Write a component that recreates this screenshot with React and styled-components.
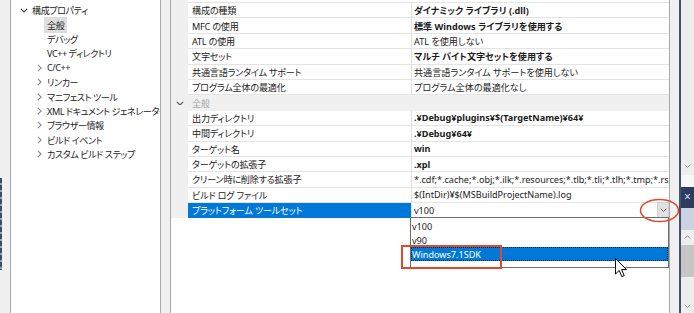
import React from 'react';
import styled, { createGlobalStyle } from 'styled-components';

const Global = createGlobalStyle`
  body {
    margin: 0;
    background: #f0f0f0;
    font-family: "Noto Sans", "Noto Sans CJK JP", sans-serif;
    font-feature-settings: "palt";
    font-size: 9.1px;
    color: #1b1b1b;
  }
`;

const Screen = styled.div`
  position: relative;
  width: 694px;
  height: 313px;
  overflow: hidden;
  display: flex;
  background: #f0f0f0;
`;

const LeftEdge = styled.div`
  width: 10px;
  flex: none;
  display: flex;
  flex-direction: column;
  padding-top: 178px;
  box-sizing: border-box;
`;

const EdgeBits = styled.div`
  width: 2px;
  height: 92px;
  background: repeating-linear-gradient(#3f4d66 0 5px, #9aa4b4 5px 7px);
`;

const TreePanel = styled.div`
  width: 151px;
  flex: none;
  box-sizing: border-box;
  border-left: 1px solid #a9a9a9;
  border-right: 1px solid #a9a9a9;
  background: #fff;
  padding-top: 3px;
  overflow: hidden;
  letter-spacing: -0.45px;
`;

const TreeItem = styled.div`
  height: 14.4px;
  display: flex;
  align-items: center;
  padding-left: ${(p) => p.indent}px;
  white-space: nowrap;
`;

const Chevron = styled.span`
  width: ${(p) => p.w || 12}px;
  flex: none;
  display: flex;
  align-items: center;
  justify-content: center;
`;

const TreeLabel = styled.span`
  padding: 1px 3px;
  margin-left: -3px;
  background: ${(p) => (p.selected ? '#dedede' : 'transparent')};
`;

const Splitter = styled.div`
  width: 9px;
  flex: none;
`;

const Grid = styled.div`
  width: 500px;
  flex: none;
  box-sizing: border-box;
  border-left: 1px solid #a9a9a9;
  border-right: 1px solid #a9a9a9;
  background: #fff;
  display: flex;
  flex-direction: column;
`;

const TopStub = styled.div`
  height: 3px;
  box-sizing: border-box;
  display: flex;
  &::before {
    content: '';
    width: 17px;
    background: #f0f0f0;
  }
  &::after {
    content: '';
    flex: 1;
    border-bottom: 1px solid #e4e4e4;
  }
`;

const Row = styled.div`
  position: relative;
  height: 15.4px;
  display: flex;
  flex: none;
`;

const Gutter = styled.div`
  width: 17px;
  flex: none;
  background: #f0f0f0;
  display: flex;
  align-items: center;
  justify-content: center;
`;

const NameCell = styled.div`
  width: 224px;
  flex: none;
  box-sizing: border-box;
  padding-left: 4px;
  display: flex;
  align-items: center;
  white-space: nowrap;
  overflow: hidden;
  letter-spacing: -0.2px;
  border-right: 1px solid #e0e0e0;
  border-bottom: 1px solid ${(p) => (p.selected ? '#0078d7' : '#e4e4e4')};
  background: ${(p) => (p.selected ? '#0078d7' : '#fff')};
  color: ${(p) => (p.selected ? '#fff' : '#1b1b1b')};
`;

const ValueCell = styled.div`
  position: relative;
  flex: 1;
  min-width: 0;
  box-sizing: border-box;
  padding-left: 2px;
  display: flex;
  align-items: center;
  white-space: nowrap;
  border-bottom: 1px solid #e4e4e4;
  font-weight: ${(p) => (p.bold ? 700 : 400)};
`;

const ValueText = styled.span`
  flex: 1;
  overflow: hidden;
`;

const HeaderRow = styled.div`
  height: 15.4px;
  display: flex;
  flex: none;
  background: #f0f0f0;
  color: #a6a6a6;
  align-items: center;
`;

const HeaderLabel = styled.span`
  padding-left: 4px;
`;

const DropButton = styled.div`
  width: 12px;
  height: 16px;
  flex: none;
  align-self: center;
  box-sizing: border-box;
  background: #e1e1e1;
  border: 1px solid #d0d0d0;
  display: flex;
  align-items: center;
  justify-content: center;
`;

const ListBox = styled.div`
  position: absolute;
  top: 100%;
  left: -2px;
  right: 0;
  height: 51px;
  box-sizing: border-box;
  border: 1px solid #6d6d6d;
  background: #fff;
  z-index: 2;
  font-weight: 400;
  padding-top: 1px;
`;

const ListItem = styled.div`
  height: 14px;
  display: flex;
  align-items: center;
  padding-left: 1px;
  box-sizing: border-box;
  background: ${(p) => (p.selected ? '#0078d7' : 'transparent')};
  color: ${(p) => (p.selected ? '#fff' : '#1b1b1b')};
  outline: ${(p) => (p.selected ? '1px dotted #0c2a55' : 'none')};
  outline-offset: -1px;
`;

const RightGap = styled.div`
  width: 9px;
  flex: none;
`;

const RightStrip = styled.div`
  width: 15px;
  flex: none;
  box-sizing: border-box;
  border-left: 2px solid #46526b;
  display: flex;
  flex-direction: column;
`;

const StripBlock = styled.div`
  height: ${(p) => p.h}px;
  flex: ${(p) => (p.h ? 'none' : 1)};
  background: ${(p) => p.bg};
  display: flex;
  flex-direction: column;
  align-items: center;
  justify-content: ${(p) => p.justify || 'center'};
  padding: ${(p) => p.pad || '0'};
  box-sizing: border-box;
`;

const CloseGlyph = styled.span`
  color: #d8dce6;
  font-size: 12px;
  line-height: 1;
  margin-top: 4px;
`;

const Ellipse = styled.svg`
  position: absolute;
  left: 639px;
  top: 198px;
  z-index: 5;
`;

const Callout = styled.div`
  position: absolute;
  left: 401px;
  top: 245px;
  width: 101px;
  height: 24px;
  box-sizing: border-box;
  border: 2px solid #e2492b;
  z-index: 5;
`;

const Cursor = styled.svg`
  position: absolute;
  left: 615px;
  top: 258px;
  z-index: 6;
`;

const Down = ({ color = '#555', size = 7 }) => (
  <svg width={size} height={size * 0.6} viewBox="0 0 10 6">
    <polyline points="1,1 5,5 9,1" fill="none" stroke={color} strokeWidth="1.4" />
  </svg>
);

const Up = ({ color = '#8a8a8a', size = 7 }) => (
  <svg width={size} height={size * 0.6} viewBox="0 0 10 6">
    <polyline points="1,5 5,1 9,5" fill="none" stroke={color} strokeWidth="1.4" />
  </svg>
);

const Right = ({ color = '#8a8a8a' }) => (
  <svg width="5" height="8" viewBox="0 0 6 10">
    <polyline points="1,1 5,5 1,9" fill="none" stroke={color} strokeWidth="1.4" />
  </svg>
);

const treeItems = [
  { label: '全般', selected: true },
  { label: 'デバッグ' },
  { label: 'VC++ ディレクトリ' },
  { label: 'C/C++', child: true },
  { label: 'リンカー', child: true },
  { label: 'マニフェスト ツール', child: true },
  { label: 'XML ドキュメント ジェネレーター', child: true },
  { label: 'ブラウザー情報', child: true },
  { label: 'ビルド イベント', child: true },
  { label: 'カスタム ビルド ステップ', child: true },
];

const topRows = [
  ['構成の種類', 'ダイナミック ライブラリ (.dll)', true],
  ['MFC の使用', '標準 Windows ライブラリを使用する', true],
  ['ATL の使用', 'ATL を使用しない', false],
  ['文字セット', 'マルチ バイト文字セットを使用する', true],
  ['共通言語ランタイム サポート', '共通言語ランタイム サポートを使用しない', false],
  ['プログラム全体の最適化', 'プログラム全体の最適化なし', false],
];

const generalRows = [
  ['出力ディレクトリ', '.¥Debug¥plugins¥$(TargetName)¥64¥', true],
  ['中間ディレクトリ', '.¥Debug¥64¥', true],
  ['ターゲット名', 'win', true],
  ['ターゲットの拡張子', '.xpl', true],
  [
    'クリーン時に削除する拡張子',
    '*.cdf;*.cache;*.obj;*.ilk;*.resources;*.tlb;*.tli;*.tlh;*.tmp;*.rsp;*.pgc;*.pgd;$(TargetPath)',
    false,
  ],
  ['ビルド ログ ファイル', '$(IntDir)¥$(MSBuildProjectName).log', false],
];

const PropRow = ({ name, value, bold }) => (
  <Row>
    <Gutter />
    <NameCell>{name}</NameCell>
    <ValueCell bold={bold}>
      <ValueText>{value}</ValueText>
    </ValueCell>
  </Row>
);

const App = () => {
  return (
    <Screen>
      <Global />
      <LeftEdge>
        <EdgeBits />
      </LeftEdge>

      <TreePanel>
        <TreeItem indent={5}>
          <Chevron w={16}>
            <Down color="#444" size={8} />
          </Chevron>
          <span>構成プロパティ</span>
        </TreeItem>
        {treeItems.map((item) => (
          <TreeItem key={item.label} indent={21}>
            <Chevron w={15}>{item.child && <Right />}</Chevron>
            <TreeLabel selected={item.selected}>{item.label}</TreeLabel>
          </TreeItem>
        ))}
      </TreePanel>

      <Splitter />

      <Grid>
        <TopStub />
        {topRows.map(([n, v, b]) => (
          <PropRow key={n} name={n} value={v} bold={b} />
        ))}
        <HeaderRow>
          <Gutter>
            <Down color="#555" size={8} />
          </Gutter>
          <HeaderLabel>全般</HeaderLabel>
        </HeaderRow>
        {generalRows.map(([n, v, b]) => (
          <PropRow key={n} name={n} value={v} bold={b} />
        ))}
        <Row>
          <Gutter />
          <NameCell selected>プラットフォーム ツールセット</NameCell>
          <ValueCell>
            <ValueText>v100</ValueText>
            <DropButton>
              <Down color="#666" size={7} />
            </DropButton>
            <ListBox>
              <ListItem>v100</ListItem>
              <ListItem>v90</ListItem>
              <ListItem selected>Windows7.1SDK</ListItem>
            </ListBox>
          </ValueCell>
        </Row>
      </Grid>

      <RightGap />

      <RightStrip>
        <StripBlock h={175} bg="#eeeeee" justify="flex-end" pad="0 0 7px">
          <Down color="#9a9a9a" size={7} />
        </StripBlock>
        <StripBlock h={12} bg="#f7f7f7" />
        <StripBlock h={21} bg="#2c3d60" justify="flex-start">
          <CloseGlyph>×</CloseGlyph>
        </StripBlock>
        <StripBlock h={22} bg="#cbd2e2" />
        <StripBlock h={15} bg="#eeeeee" justify="flex-start" pad="5px 0 0">
          <Up />
        </StripBlock>
        <StripBlock h={32} bg="#c6c6c6" />
        <StripBlock bg="#eeeeee" justify="flex-end" pad="0 0 5px">
          <Down color="#9a9a9a" size={7} />
        </StripBlock>
      </RightStrip>

      <Ellipse width="42" height="26" viewBox="0 0 42 26">
        <ellipse cx="20.5" cy="12.5" rx="19" ry="11" fill="none" stroke="#e2492b" strokeWidth="1.5" />
      </Ellipse>
      <Callout />
      <Cursor width="13" height="20" viewBox="0 0 13 20">
        <polygon
          points="0.5,0.5 0.5,16 4.2,12.4 6.8,18.6 9.2,17.6 6.6,11.6 11.5,11.6"
          fill="#fff"
          stroke="#000"
          strokeWidth="1"
          strokeLinejoin="round"
        />
      </Cursor>
    </Screen>
  );
};

export default App;
